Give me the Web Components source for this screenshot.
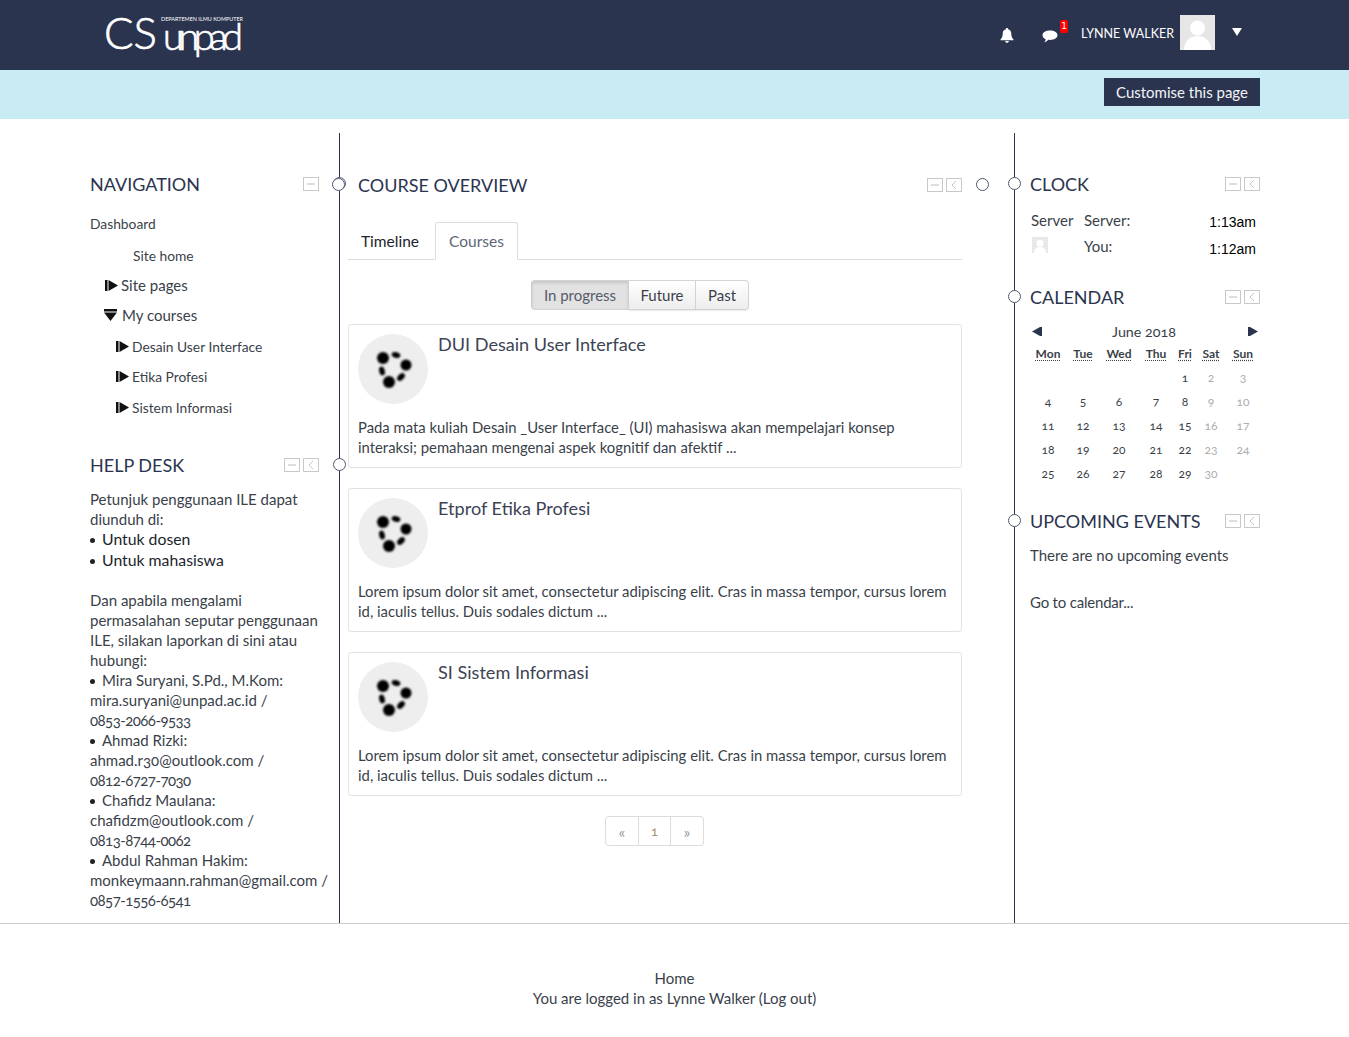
<!DOCTYPE html>
<html lang="en">
<head>
<meta charset="utf-8">
<title>Dashboard</title>
<style>
  html, body { margin: 0; padding: 0; background: #fff; }
  body { font-family: "Lato", "Liberation Sans", sans-serif; color: #3a3f4a; font-variant-numeric: oldstyle-nums; }
  a { color: inherit; text-decoration: none; }
</style>
</head>
<body>
<site-header></site-header>
<page-band></page-band>
<page-main>
  <div slot="left">
    <side-block heading="NAVIGATION" controls="1" side="right" top="41">
      <nav-tree></nav-tree>
    </side-block>
    <side-block heading="HELP DESK" controls="2" side="right" top="33">
      <help-desk></help-desk>
    </side-block>
  </div>
  <div slot="center">
    <side-block heading="COURSE OVERVIEW" controls="2" side="far" top="42">
      <course-overview></course-overview>
    </side-block>
  </div>
  <div slot="right">
    <side-block heading="CLOCK" controls="2" side="left" top="41">
      <clock-box></clock-box>
    </side-block>
    <side-block heading="CALENDAR" controls="2" side="left" top="28">
      <month-calendar></month-calendar>
    </side-block>
    <side-block heading="UPCOMING EVENTS" controls="2" side="left" top="25">
      <upcoming-box></upcoming-box>
    </side-block>
  </div>
</page-main>
<site-footer></site-footer>

<script>
const NAVY = '#2b344f';

class SiteHeader extends HTMLElement {
  constructor() {
    super();
    this.attachShadow({ mode: 'open' });
  }
  connectedCallback() {
    this.shadowRoot.innerHTML = `
      <style>
        :host { display: flex; height: 70px; background: ${NAVY}; align-items: flex-start; justify-content: space-between; color: #fff; font-family: "Lato", sans-serif; }
        .logo { display: block; margin: 8px 0 0 104px; overflow: visible; }
        .logo text { fill: #fff; font-family: "Lato", sans-serif; }
        .logo .big { stroke: #fff; stroke-width: .7px; }
        .user { display: flex; align-items: flex-start; padding: 15px 107px 0 0; }
        .bell { margin: 13px 0 0 0; }
        .chat { margin: 15px 0 0 28px; }
        .msg { position: relative; }
        .badge { position: absolute; left: 46px; top: 5px; width: 8px; height: 13px; background: #f00; border-radius: 2px; font: 9px/13px "DejaVu Sans", sans-serif; text-align: center; color: #fff; }
        .name { font-size: 12.500px; line-height: 36px; margin-left: 23px; padding-top: 1px; white-space: nowrap; }
        .ava { display: block; margin-left: 6px; }
        .caret { margin: 13px 0 0 17px; }
      </style>
      <svg class="logo" width="150" height="56" viewBox="0 0 150 56">
        <text class="big" x="0" y="41" font-size="44" font-weight="300" textLength="53" lengthAdjust="spacingAndGlyphs">CS</text>
        <text x="57" y="13" font-size="5" textLength="82" lengthAdjust="spacingAndGlyphs">DEPARTEMEN ILMU KOMPUTER</text>
        <text class="big" x="59" y="42" font-size="38" font-weight="300" textLength="80" lengthAdjust="spacing">unpad</text>
      </svg>
      <div class="user">
        <svg class="bell" width="14" height="15" viewBox="0 0 14 15"><path fill="#fff" d="M7 0c.8 0 1.2.5 1.2 1.2C10.300 1.800 11.300 3.400 11.300 5.800c0 2.800.7 4.200 2.200 5.700v.8H.5v-.8C2 10 2.700 8.600 2.700 5.800c0-2.400 1-4 3.100-4.600C5.800.5 6.200 0 7 0zM5.200 13h3.600c0 1-.8 1.800-1.800 1.800S5.200 14 5.200 13z"/></svg>
        <div class="msg">
          <svg class="chat" width="16" height="13" viewBox="0 0 16 13"><path fill="#fff" d="M8 .5c4.200 0 7.500 2.100 7.500 4.700S12.200 9.900 8 9.900c-.6 0-1.100 0-1.600-.1C5.300 11 3.900 12 2.300 12.300c.8-.8 1.300-1.800 1.400-3C1.800 8.400.5 7 .5 5.200.5 2.600 3.800.5 8 .5z"/></svg>
          <span class="badge">1</span>
        </div>
        <span class="name">LYNNE WALKER</span>
        <svg class="ava" width="35" height="35" viewBox="0 0 35 35"><rect width="35" height="35" fill="#e6e6e6"/><circle cx="17.500" cy="13" r="7.500" fill="#fff"/><path fill="#fff" d="M4 35c0-9 6-14 13.500-14S31 26 31 35z"/></svg>
        <svg class="caret" width="10" height="8" viewBox="0 0 10 8"><path fill="#fff" d="M0 0h10L5 8z"/></svg>
      </div>`;
  }
}

class PageBand extends HTMLElement {
  constructor() {
    super();
    this.attachShadow({ mode: 'open' });
  }
  connectedCallback() {
    this.shadowRoot.innerHTML = `
      <style>
        :host { display: flex; justify-content: flex-end; height: 49px; background: #c9ebf3; padding-right: 89px; box-sizing: border-box; font-family: "Lato", sans-serif; }
        button { margin-top: 8px; width: 156px; height: 28px; padding: 0; border: 0; background: ${NAVY}; color: #f2f4f8; font: 15px "Lato", sans-serif; }
      </style>
      <button type="button">Customise this page</button>`;
  }
}

// three columns with the vertical rules between them
class PageMain extends HTMLElement {
  constructor() {
    super();
    this.attachShadow({ mode: 'open' });
  }
  connectedCallback() {
    this.shadowRoot.innerHTML = `
      <style>
        :host { display: grid; grid-template-columns: 340px 675px 1fr; height: 790px; margin-top: 14px; }
        .left { padding-left: 90px; padding-right: 20px; border-right: 1px solid ${NAVY}; box-sizing: border-box; }
        .center { padding: 0 53px 0 8px; }
        .right { padding: 0 89px 0 15px; border-left: 1px solid ${NAVY}; margin-left: -1px; }
      </style>
      <div class="left"><slot name="left"></slot></div>
      <div class="center"><slot name="center"></slot></div>
      <div class="right"><slot name="right"></slot></div>`;
  }
}

// block with a heading, dock controls and the round marker on the rule
class SideBlock extends HTMLElement {
  constructor() {
    super();
    this.attachShadow({ mode: 'open' });
  }
  connectedCallback() {
    const n = parseInt(this.getAttribute('controls') || '2');
    const minus = `<svg width="16" height="14" viewBox="0 0 16 14"><rect x=".5" y=".5" width="15" height="13" fill="#fff" stroke="#c8c8c8"/><path d="M4 7h8" stroke="#bdbdbd"/></svg>`;
    const dock = `<svg width="16" height="14" viewBox="0 0 16 14"><rect x=".5" y=".5" width="15" height="13" fill="#fff" stroke="#c8c8c8"/><path d="M10 3L6 7l4 4" fill="none" stroke="#c4c4c4"/></svg>`;
    const side = this.getAttribute('side');
    const titlePad = this.getAttribute('heading') === 'COURSE OVERVIEW' ? 10 : 0;
    this.shadowRoot.innerHTML = `
      <style>
        :host { display: block; position: relative; padding-top: ${this.getAttribute('top')}px; font-family: "Lato", sans-serif; }
        .head { display: flex; justify-content: space-between; align-items: center; height: 20px; padding-left: ${titlePad}px; }
        h2 { margin: 0; font-size: 18px; font-weight: 400; color: ${NAVY}; line-height: 20px; white-space: nowrap; }
        .ctl { display: flex; gap: 3px; }
        svg { display: block; }
        .dot { position: absolute; width: 11px; height: 11px; border: 1.500px solid #50586f; border-radius: 50%; background: #fff; top: calc(${this.getAttribute('top')}px + 3px); }
        .right { right: -27px; }
        .left { left: -22px; }
        .far { right: -27px; }
      </style>
      <div class="head"><h2>${this.getAttribute('heading')}</h2><div class="ctl">${n > 1 ? minus + dock : minus}</div></div>
      <span class="dot ${side}"></span>
      ${side === 'far' ? '<span class="dot" style="left:-16px"></span>' : ''}
      <slot></slot>`;
  }
}

class NavTree extends HTMLElement {
  constructor() {
    super();
    this.attachShadow({ mode: 'open' });
  }
  connectedCallback() {
    const closed = `<svg width="13" height="11" viewBox="0 0 13 11"><rect y="0" width="2.500" height="11" fill="#111"/><path d="M3.500 0L13 5.500 3.500 11z" fill="#111"/></svg>`;
    const open = `<svg width="13" height="12" viewBox="0 0 13 12" style="margin-right:2px"><rect x="0" y="0" width="13" height="2.500" fill="#111"/><path d="M0 3.500h13L6.500 12z" fill="#111"/></svg>`;
    const row = (h, pad, size, icon, text) => `<div class="row" style="height:${h}px;padding-left:${pad}px;font-size:${size}px">${icon}<span>${text}</span></div>`;
    this.shadowRoot.innerHTML = `
      <style>
        :host { display: block; padding-top: 13px; color: #3a3f4a; }
        .row { display: flex; align-items: center; gap: 3px; white-space: nowrap; }
        svg { flex: none; }
      </style>
      ${row(32, 0, 13.8, '', 'Dashboard')}
      ${row(32, 43, 13.8, '', 'Site home')}
      ${row(28, 15, 15, closed, 'Site pages')}
      ${row(32, 14, 15, open, 'My courses')}
      ${row(30, 26, 13.8, closed, 'Desain User Interface')}
      ${row(31, 26, 13.8, closed, 'Etika Profesi')}
      ${row(30, 26, 13.8, closed, 'Sistem Informasi')}`;
  }
}

class HelpDesk extends HTMLElement {
  constructor() {
    super();
    this.attachShadow({ mode: 'open' });
  }
  connectedCallback() {
    const tel = n => `<span class="tel">${n}</span>`;
    this.shadowRoot.innerHTML = `
      <style>
        :host { display: block; margin-right: -10px; padding-top: 14px; font-size: 15px; line-height: 20px; color: #3a3f4a; }
        p { margin: 0; }
        .gap { height: 20px; }
        .dark { color: #20242c; font-size: 15.800px; line-height: 20.500px; }
        .tel { letter-spacing: -.55px; }
        i { display: inline-block; width: 5px; height: 5px; border-radius: 50%; background: #222; margin: 0 7px 2px 0; }
      </style>
      <p>Petunjuk penggunaan ILE dapat<br>diunduh di:</p>
      <p class="dark"><i></i>Untuk dosen</p>
      <p class="dark"><i></i>Untuk mahasiswa</p>
      <div class="gap"></div>
      <p>Dan apabila mengalami<br>permasalahan seputar penggunaan<br>ILE, silakan laporkan di sini atau<br>hubungi:</p>
      <p><i></i>Mira Suryani, S.Pd., M.Kom:<br>mira.suryani@unpad.ac.id /<br>${tel('0853-2066-9533')}</p>
      <p><i></i>Ahmad Rizki:<br>ahmad.r30@outlook.com /<br>${tel('0812-6727-7030')}</p>
      <p><i></i>Chafidz Maulana:<br>chafidzm@outlook.com /<br>${tel('0813-8744-0062')}</p>
      <p><i></i>Abdul Rahman Hakim:<br>monkeymaann.rahman@gmail.com /<br>${tel('0857-1556-6541')}</p>`;
  }
}

class CourseCard extends HTMLElement {
  constructor() {
    super();
    this.attachShadow({ mode: 'open' });
  }
  connectedCallback() {
    this.shadowRoot.innerHTML = `
      <style>
        :host { display: block; box-sizing: border-box; height: 144px; padding: 9px 9px 0; border: 1px solid #e3e3e3; border-radius: 3px; color: #3a3f4a; }
        .top { display: flex; gap: 10px; height: 70px; }
        .pic { display: block; flex: none; }
        h3 { margin: 0; font-size: 18.100px; font-weight: 400; line-height: 20px; color: #3d4354; }
        p { margin: 13px 0 0; font-size: 14.850px; line-height: 20px; }
      </style>
      <div class="top">
        <svg class="pic" width="70" height="70" viewBox="0 0 70 70">
          <defs><filter id="b" x="-30%" y="-30%" width="160%" height="160%"><feGaussianBlur stdDeviation="1"/></filter></defs>
          <circle cx="35" cy="35" r="35" fill="#eee"/>
          <g fill="#000" filter="url(#b)">
            <circle cx="25" cy="24" r="6"/><circle cx="48" cy="31" r="5.500"/><circle cx="31" cy="48" r="6"/>
            <ellipse cx="38" cy="21" rx="4.500" ry="2.800" transform="rotate(17 38 21)"/>
            <ellipse cx="24" cy="37" rx="4.500" ry="2.800" transform="rotate(76 24 37)"/>
            <ellipse cx="43" cy="43" rx="4.500" ry="3" transform="rotate(135 43 43)"/>
          </g>
        </svg>
        <h3>${this.getAttribute('heading')}</h3>
      </div>
      <p><slot></slot></p>`;
  }
}

class CourseOverview extends HTMLElement {
  constructor() {
    super();
    this.attachShadow({ mode: 'open' });
  }
  connectedCallback() {
    this.shadowRoot.innerHTML = `
      <style>
        :host { display: block; padding-top: 27px; color: #3a3f4a; }
        .tabs { display: flex; height: 37px; border-bottom: 1px solid #ddd; font-size: 15.500px; }
        .tabs span { display: flex; align-items: center; box-sizing: border-box; height: 37px; }
        .t1 { width: 87px; padding-left: 13px; color: #20242c; }
        .t2 { width: 83px; justify-content: center; color: #5e6675; border: 1px solid #ddd; border-bottom: 1px solid #fff; border-radius: 3px 3px 0 0; height: 38px !important; background: #fff; }
        .group { display: flex; justify-content: center; margin: 20px 30px 0 0; font-size: 15px; }
        .group span { display: flex; align-items: center; justify-content: center; box-sizing: border-box; height: 30px; border: 1px solid #d4d4d4; border-left: 0; background: linear-gradient(#fff, #ededed); box-shadow: 0 1px 1px rgba(0,0,0,.08); }
        .group .on { width: 98px; border-left: 1px solid #ccc; border-radius: 4px 0 0 4px; background: #e2e2e2; box-shadow: inset 0 2px 3px rgba(0,0,0,.12); color: #555c6b; }
        .group .f { width: 67px; }
        .group .p { width: 53px; border-radius: 0 4px 4px 0; }
        .cards { display: flex; flex-direction: column; gap: 20px; margin-top: 14px; }
        .pager { display: flex; justify-content: center; margin: 20px 1px 0 0; font-size: 13px; color: #9a9a9a; }
        .pager span { display: flex; align-items: center; justify-content: center; box-sizing: border-box; height: 30px; border: 1px solid #ddd; border-left: 0; }
        .pager .a { width: 34px; border-left: 1px solid #ddd; border-radius: 4px 0 0 4px; font-size: 16px; }
        .pager .b { width: 32px; color: #a38f73; }
        .pager .c { width: 33px; border-radius: 0 4px 4px 0; font-size: 16px; }
      </style>
      <div class="tabs"><span class="t1">Timeline</span><span class="t2">Courses</span></div>
      <div class="group"><span class="on">In progress</span><span class="f">Future</span><span class="p">Past</span></div>
      <div class="cards">
        <course-card heading="DUI Desain User Interface">Pada mata kuliah Desain _User Interface_ (UI) mahasiswa akan mempelajari konsep interaksi; pemahaan mengenai aspek kognitif dan afektif ...</course-card>
        <course-card heading="Etprof Etika Profesi">Lorem ipsum dolor sit amet, consectetur adipiscing elit. Cras in massa tempor, cursus lorem id, iaculis tellus. Duis sodales dictum ...</course-card>
        <course-card heading="SI Sistem Informasi">Lorem ipsum dolor sit amet, consectetur adipiscing elit. Cras in massa tempor, cursus lorem id, iaculis tellus. Duis sodales dictum ...</course-card>
      </div>
      <div class="pager"><span class="a">«</span><span class="b">1</span><span class="c">»</span></div>`;
  }
}

class ClockBox extends HTMLElement {
  constructor() {
    super();
    this.attachShadow({ mode: 'open' });
  }
  connectedCallback() {
    this.shadowRoot.innerHTML = `
      <style>
        :host { display: grid; grid-template-columns: 53px 1fr auto; grid-template-rows: 26px 26px; padding: 13px 4px 0 1px; font-size: 15px; color: #3a3f4a; align-items: center; }
        .time { font: 14px "Liberation Sans", sans-serif; color: #000; padding-top: 4px; }
        svg { display: block; margin: 0 0 2px 1px; }
      </style>
      <span>Server</span><span>Server:</span><span class="time">1:13am</span>
      <svg width="16" height="16" viewBox="0 0 16 16"><rect width="16" height="16" fill="#e8e8e8"/><circle cx="8" cy="6" r="3.500" fill="#fff"/><path fill="#fff" d="M2 16c0-4 2.500-6 6-6s6 2 6 6z"/></svg>
      <span>You:</span><span class="time" style="padding-top:6px">1:12am</span>`;
  }
}

class MonthCalendar extends HTMLElement {
  constructor() {
    super();
    this.attachShadow({ mode: 'open' });
  }
  connectedCallback() {
    const names = ['Mon', 'Tue', 'Wed', 'Thu', 'Fri', 'Sat', 'Sun'];
    let cells = names.map(n => `<b>${n}</b>`).join('');
    for (let i = 0; i < 4; i++) cells += '<span></span>';
    for (let d = 1; d <= 30; d++) {
      const col = (d + 3) % 7; // 1 June 2018 is a Friday
      cells += `<span class="${col === 5 || col === 6 ? 'we' : ''}">${d}</span>`;
    }
    this.shadowRoot.innerHTML = `
      <style>
        :host { display: block; padding-top: 14px; color: #3a3f4a; }
        .top { display: flex; justify-content: space-between; align-items: center; height: 20px; padding: 0 2px; font-size: 14.300px; }
        .top span { margin-left: -2px; }
        .grid { display: grid; grid-template-columns: 36px 34px 38px 36px 22px 30px 34px; grid-template-rows: 25px repeat(5, 24px); justify-items: center; align-items: center; margin-top: -.5px; font-size: 12px; }
        b { font-size: 12px; font-weight: 700; color: #3a3f4a; text-decoration: underline dotted; text-underline-offset: 2px; }
        .we { color: #adadad; }
      </style>
      <div class="top">
        <svg width="10" height="9" viewBox="0 0 10 9"><path d="M0 4.500L8 0v9z" fill="${NAVY}"/><rect x="8" width="2" height="9" fill="${NAVY}"/></svg>
        <span>June 2018</span>
        <svg width="10" height="9" viewBox="0 0 10 9"><rect width="2" height="9" fill="${NAVY}"/><path d="M2 0l8 4.500L2 9z" fill="${NAVY}"/></svg>
      </div>
      <div class="grid">${cells}</div>`;
  }
}

class UpcomingBox extends HTMLElement {
  constructor() {
    super();
    this.attachShadow({ mode: 'open' });
  }
  connectedCallback() {
    this.shadowRoot.innerHTML = `
      <style>
        :host { display: block; padding-top: 14px; font-size: 15px; line-height: 20px; color: #3a3f4a; }
        p { margin: 0 0 27px; }
      </style>
      <p>There are no upcoming events</p>
      <p style="letter-spacing:-.2px">Go to calendar...</p>`;
  }
}

class SiteFooter extends HTMLElement {
  constructor() {
    super();
    this.attachShadow({ mode: 'open' });
  }
  connectedCallback() {
    this.shadowRoot.innerHTML = `
      <style>
        :host { display: block; height: 113px; box-sizing: border-box; padding-top: 44px; border-top: 1px solid #ccc; text-align: center; font: 15px/20px "Lato", sans-serif; color: #3a3f4a; }
      </style>
      <div>Home</div>
      <div>You are logged in as Lynne Walker (Log out)</div>`;
  }
}

customElements.define('site-header', SiteHeader);
customElements.define('page-band', PageBand);
customElements.define('page-main', PageMain);
customElements.define('side-block', SideBlock);
customElements.define('nav-tree', NavTree);
customElements.define('help-desk', HelpDesk);
customElements.define('course-card', CourseCard);
customElements.define('course-overview', CourseOverview);
customElements.define('clock-box', ClockBox);
customElements.define('month-calendar', MonthCalendar);
customElements.define('upcoming-box', UpcomingBox);
customElements.define('site-footer', SiteFooter);
</script>
</body>
</html>
